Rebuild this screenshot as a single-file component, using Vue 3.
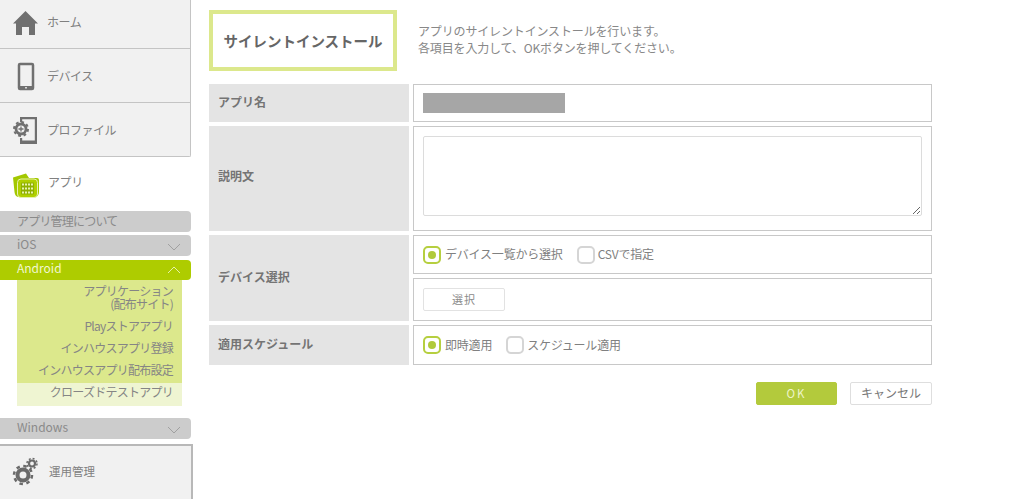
<script setup>
const subs = [
  { t: 'アプリケーション\n(配布サイト)', cls: 'two' },
  { t: 'Playストアアプリ' },
  { t: 'インハウスアプリ登録' },
  { t: 'インハウスアプリ配布設定' },
]
</script>

<template>
  <div class="page">
    <aside class="side">
      <div class="nav nav-first">
        <svg class="ic" viewBox="0 0 26 28" width="26" height="28"><path fill="#707070" d="M12.500 2 25 14.500H22V26H16V18H9V26H3V14.500H0Z"/></svg>
        <span>ホーム</span>
      </div>
      <div class="nav">
        <svg class="ic" viewBox="0 0 26 28" width="26" height="28">
          <rect x="6" y="2" width="14" height="25" rx="1" fill="none" stroke="#707070" stroke-width="2.500"/>
          <rect x="6" y="24" width="14" height="3.500" fill="#707070"/>
          <rect x="12" y="25" width="2" height="1.500" fill="#d8d8d8"/>
        </svg>
        <span>デバイス</span>
      </div>
      <div class="nav nav-last">
        <svg class="ic" viewBox="0 0 26 28" width="26" height="28">
          <path fill="none" stroke="#707070" stroke-width="2.200" d="M8.100 6V2.100H22.900V26.900H8.100V22"/>
          <rect x="8" y="24.500" width="15" height="3.500" fill="#707070"/>
          <circle cx="8" cy="13" r="5" fill="#f1f1f1" stroke="#707070" stroke-width="2.800"/>
          <circle cx="8" cy="13" r="7" fill="none" stroke="#707070" stroke-width="2" stroke-dasharray="2.800 2.700"/>
          <path stroke="#707070" stroke-width="1.300" d="M5.500 13H10.500M8 10.500V15.500"/>
        </svg>
        <span>プロファイル</span>
      </div>
      <div class="nav-app">
        <svg class="ic" viewBox="0 0 26 28" width="26" height="28">
          <path fill="#a3c800" d="M0 7.500 13 3.500 16 8H24Q26 8 26 10V22Q26 27 21 27H6Q2 27 1.500 22Z"/>
          <rect x="4.500" y="9" width="20" height="18.500" rx="3.500" fill="#b0d000" stroke="#e6f0b0" stroke-width="1"/>
          <rect x="8" y="12.500" width="13" height="12" rx="1" fill="#8fb000"/>
          <path stroke="#e8f2b0" stroke-width="2" stroke-dasharray="2 1" d="M9 14.500H20M9 18.500H20M9 22.500H20"/>
        </svg>
        <span>アプリ</span>
      </div>
      <div class="pill pill-about"><span>アプリ管理について</span></div>
      <div class="pill pill-ios">
        <span>iOS</span>
        <svg viewBox="0 0 14 8" width="14" height="8"><path fill="none" stroke="#a0a0a0" d="M1 1 7 7 13 1"/></svg>
      </div>
      <div class="pill pill-on">
        <span>Android</span>
        <svg viewBox="0 0 14 8" width="14" height="8"><path fill="none" stroke="#e6f2a8" d="M1 7 7 1 13 7"/></svg>
      </div>
      <ul class="subs">
        <li v-for="s in subs" :key="s.t" :class="s.cls">{{ s.t }}</li>
        <li class="cur">クローズドテストアプリ</li>
      </ul>
      <div class="pill pill-win">
        <span>Windows</span>
        <svg viewBox="0 0 14 8" width="14" height="8"><path fill="none" stroke="#a0a0a0" d="M1 1 7 7 13 1"/></svg>
      </div>
      <div class="ops">
        <svg class="ic" viewBox="0 0 26 28" width="26" height="28">
          <circle cx="10" cy="16" r="5.500" fill="none" stroke="#6a6a6a" stroke-width="4"/>
          <circle cx="10" cy="16" r="9" fill="none" stroke="#6a6a6a" stroke-width="2.500" stroke-dasharray="3.500 3.570"/>
          <circle cx="19" cy="4.500" r="3" fill="none" stroke="#6a6a6a" stroke-width="2.200"/>
          <circle cx="19" cy="4.500" r="5" fill="none" stroke="#6a6a6a" stroke-width="1.500" stroke-dasharray="2 1.930"/>
        </svg>
        <span>運用管理</span>
      </div>
    </aside>

    <main class="main">
      <header class="head">
        <h1 class="title">サイレントインストール</h1>
        <p class="desc">アプリのサイレントインストールを行います。<br>各項目を入力して、OKボタンを押してください。</p>
      </header>

      <div class="form">
        <div class="label l1">アプリ名</div>
        <div class="cell c1"><div class="mask"></div></div>

        <div class="label l2">説明文</div>
        <div class="cell c2"><textarea class="area"></textarea></div>

        <div class="label l3">デバイス選択</div>
        <div class="stack">
          <div class="cell c3">
            <span class="radio on"></span><span class="opt">デバイス一覧から選択</span>
            <span class="radio"></span><span class="opt">CSVで指定</span>
          </div>
          <div class="cell c4"><button class="pick">選択</button></div>
        </div>

        <div class="label l4">適用スケジュール</div>
        <div class="cell c3 c5">
          <span class="radio on"></span><span class="opt">即時適用</span>
          <span class="radio"></span><span class="opt">スケジュール適用</span>
        </div>
      </div>

      <div class="actions">
        <button class="ok">OK</button>
        <button class="cancel">キャンセル</button>
      </div>
    </main>
  </div>
</template>

<style>
html, body { margin: 0; background: #fff; overflow: hidden; }
</style>

<style scoped>
.page {
  display: flex;
  width: 1024px;
  height: 499px;
  overflow: hidden;
  background: #fff;
  font-family: "Noto Sans CJK JP", "Liberation Sans", sans-serif;
  color: #808080;
}
.side { width: 209px; flex: none; display: flex; flex-direction: column; }
.ic { flex: none; overflow: visible; }
.nav {
  width: 191px;
  height: 54px;
  box-sizing: border-box;
  background: #f1f1f1;
  border-right: 1px solid #c4c4c4;
  border-bottom: 1px solid #c4c4c4;
  display: flex;
  align-items: center;
  padding-left: 13px;
  gap: 8px;
  font-size: 12px;
  letter-spacing: -.5px;
}
.nav .ic { margin-top: 1px; }
.nav span { margin-bottom: 1px; }
.nav-first { height: 49px; }
.nav-first .ic { margin-top: -3px; }
.nav-first span { margin-bottom: 6px; }
.nav-last { border-radius: 0 0 2px 0; }
.nav-app {
  height: 54px;
  display: flex;
  align-items: center;
  padding-left: 13px;
  gap: 9px;
  font-size: 12px;
  letter-spacing: -.4px;
}
.nav-app span { margin-bottom: 6px; }
.pill {
  width: 191px;
  height: 21px;
  box-sizing: border-box;
  background: #cccccc;
  border-radius: 0 4px 4px 0;
  padding: 0 10px 0 17px;
  display: flex;
  align-items: center;
  justify-content: space-between;
  font-size: 12px;
  color: #8a8a8a;
}
.pill span { margin-bottom: 5px; }
.pill svg { margin-top: 2px; }
.pill-about span { margin-bottom: 3px; letter-spacing: -.8px; }
.pill-ios { margin-top: 3px; }
.pill-on { margin-top: 4px; height: 20px; background: #aecc00; color: #f2f7d0; }
.pill-on svg { margin-top: 0; }
.pill-win { margin-top: 12px; }
.subs {
  margin: 0 0 0 17px;
  padding: 0;
  width: 165px;
  list-style: none;
  background: #dce88c;
  font-size: 12px;
  letter-spacing: -.75px;
  color: #858585;
  text-align: right;
}
.subs li {
  height: 22px;
  line-height: 18px;
  padding-right: 9px;
  white-space: pre-line;
}
.subs li.two { height: 37px; line-height: 13px; padding-top: 4px; box-sizing: border-box; }
.subs li.cur { background: #eff5d2; height: 23px; }
.ops {
  margin-top: 5px;
  width: 193px;
  height: 55px;
  box-sizing: border-box;
  background: #f1f1f1;
  border: 1px solid #b8b8b8;
  border-width: 2px 2px 0 0;
  display: flex;
  align-items: center;
  padding-left: 13px;
  gap: 10px;
  font-size: 11.500px;
}
.ops .ic { margin-top: 1px; }
.ops span { margin-bottom: 4px; }
.main { flex: none; width: 723px; padding-top: 10px; }
.head { display: flex; align-items: center; }
.title {
  margin: 0;
  width: 188px;
  height: 61px;
  box-sizing: border-box;
  border: 4px solid #dce88c;
  font-size: 14.500px;
  font-weight: 700;
  color: #666;
  display: flex;
  align-items: center;
  justify-content: center;
  white-space: nowrap;
}
.desc {
  margin: 0 0 4px 21px;
  font-size: 12px;
  letter-spacing: -.15px;
  line-height: 17px;
  color: #888;
}
.form {
  margin-top: 13px;
  display: grid;
  grid-template-columns: 200px 519px;
  column-gap: 4px;
  row-gap: 4px;
  grid-template-rows: 38px 105px 86px 40px;
}
.label {
  background: #e4e4e4;
  display: flex;
  align-items: center;
  padding-left: 9px;
  font-size: 12px;
  font-weight: 700;
  color: #747474;
}
.l1 { padding-bottom: 4px; }
.l2 { padding-bottom: 6px; }
.l3, .l4 { padding-bottom: 4px; }
.cell {
  box-sizing: border-box;
  border: 1px solid #c8c8c8;
  background: #fff;
  padding-left: 9px;
  display: flex;
  align-items: center;
  font-size: 12px;
  letter-spacing: -.2px;
  color: #808080;
}
.mask { width: 142px; height: 20px; background: #a6a6a6; }
.c2 { align-items: flex-start; padding-top: 9px; }
.area {
  display: block;
  box-sizing: border-box;
  width: 499px;
  height: 80px;
  margin: 0;
  border: 1px solid #dcdcdc;
  border-radius: 2px;
  background: #fff;
  outline: none;
}
.stack { display: flex; flex-direction: column; gap: 4px; }
.c3 { height: 39px; }
.c4 { flex: 1; }
.c5 { height: 40px; }
.radio {
  width: 18px;
  height: 18px;
  box-sizing: border-box;
  border: 2px solid #d5d5d5;
  border-radius: 5px;
  flex: none;
  margin-right: 3px;
  display: flex;
  align-items: center;
  justify-content: center;
}
.radio.on { border-color: #b6cf3f; margin-right: 4px; }
.radio.on::after {
  content: "";
  width: 8px;
  height: 8px;
  border-radius: 50%;
  background: #b0ca3a;
}
.opt { margin-right: 14px; margin-bottom: 2px; }
.pick {
  width: 82px;
  height: 23px;
  margin: 0;
  padding: 0 0 2px;
  border: 1px solid #e2e2e2;
  border-radius: 2px;
  background: #fff;
  font: inherit;
  font-size: 11px;
  letter-spacing: 1px;
  color: #8a8a8a;
}
.actions {
  margin: 17px 0 0 547px;
  display: flex;
  gap: 13px;
}
.ok, .cancel {
  margin: 0;
  padding: 0 0 2px;
  height: 23px;
  border-radius: 2px;
  font-family: inherit;
  font-size: 12px;
}
.ok {
  width: 81px;
  border: 1px solid #b3ca3c;
  background: #b3ca3c;
  color: #eef4c8;
  letter-spacing: 2px;
  font-size: 11.500px;
}
.cancel {
  width: 82px;
  border: 1px solid #dedede;
  background: #fff;
  color: #777;
}
</style>
